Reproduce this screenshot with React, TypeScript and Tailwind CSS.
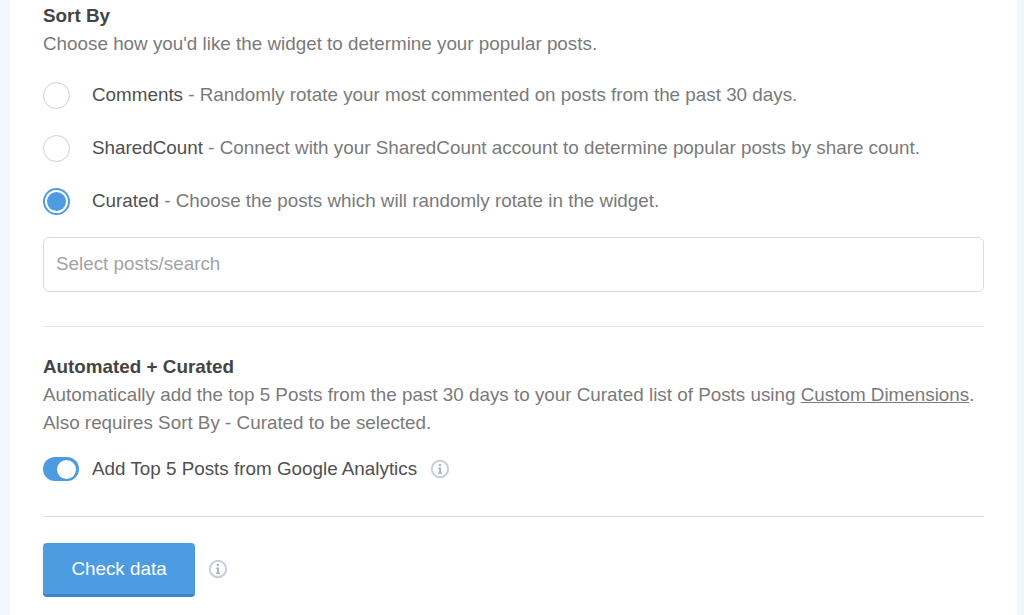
const font = "font-['Liberation_Sans',Arial,sans-serif]";

function InfoIcon() {
  return (
    <svg width="20" height="20" viewBox="0 0 20 20" fill="none">
      <circle cx="10" cy="10" r="8.2" stroke="#c8ced8" strokeWidth="2" />
      <circle cx="10" cy="6" r="1.3" fill="#adb5c1" />
      <path d="M8.2 8.6h2.8v5h1v1.4H8v-1.4h1.1v-3.6h-.9z" fill="#adb5c1" />
    </svg>
  );
}

function Radio({ checked, name, text }: { checked?: boolean; name: string; text: string }) {
  return (
    <div className="flex h-[27px] items-center">
      <span
        className={`flex h-[27px] w-[27px] shrink-0 items-center justify-center rounded-full bg-white ${
          checked ? "border-2 border-[#4d9de0]" : "border border-[#cfcfcf]"
        }`}
      >
        {checked && <span className="h-[19px] w-[19px] rounded-full bg-[#4d9be0]" />}
      </span>
      <p className="ml-[22px] text-[18.84px] text-[#7a7a7a]">
        <span className="text-[#505050]">{name}</span> - {text}
      </p>
    </div>
  );
}

export default function App() {
  return (
    <div className={`${font} flex h-[615px] w-[1024px] overflow-hidden bg-[#f3f6fe]`}>
      <main className="ml-[10px] h-full w-[1007px] bg-white pl-[33px] pr-[33px] pt-[5px]">
        <h2 className="text-[18.84px] font-bold leading-[22px] text-[#444444]">Sort By</h2>
        <p className="mt-[6px] text-[18.84px] leading-[22px] text-[#7a7a7a]">
          Choose how you'd like the widget to determine your popular posts.
        </p>

        <div className="mt-[27px] flex flex-col gap-[26px]">
          <Radio name="Comments" text="Randomly rotate your most commented on posts from the past 30 days." />
          <Radio name="SharedCount" text="Connect with your SharedCount account to determine popular posts by share count." />
          <Radio checked name="Curated" text="Choose the posts which will randomly rotate in the widget." />
        </div>

        <div className="mt-[22px] flex h-[55px] items-center rounded-[6px] border border-[#d8dcdf] px-3 text-[18.84px] text-[#a3a3a3]">
          Select posts/search
        </div>

        <hr className="mt-[34px] border-[#e4e6e8]" />

        <h2 className="mt-[29px] text-[18.84px] font-bold leading-[22px] text-[#444444]">Automated + Curated</h2>
        <p className="mt-[3px] text-[18.84px] leading-[28px] text-[#7a7a7a]">
          Automatically add the top 5 Posts from the past 30 days to your Curated list of Posts using{" "}
          <span className="underline">Custom Dimensions</span>.
          <br />
          Also requires Sort By - Curated to be selected.
        </p>

        <div className="mt-[20px] flex h-[24px] items-center">
          <span className="flex h-[24px] w-[36px] items-center justify-end rounded-full bg-[#4d9be0] pr-[3px]">
            <span className="h-[19px] w-[19px] rounded-full bg-white" />
          </span>
          <span className="ml-[13px] text-[18.84px] text-[#505050]">Add Top 5 Posts from Google Analytics</span>
          <span className="ml-[13px]">
            <InfoIcon />
          </span>
        </div>

        <hr className="mt-[35px] border-[#d9dde3]" />

        <div className="mt-[26px] flex items-center">
          <button className="h-[54px] w-[152px] rounded-[4px] border-b-[3px] border-[#3d85c6] bg-[#4d9be0] pt-[2px] text-[18.84px] text-white">
            Check data
          </button>
          <span className="mb-[3px] ml-[13px]">
            <InfoIcon />
          </span>
        </div>
      </main>
    </div>
  );
}
